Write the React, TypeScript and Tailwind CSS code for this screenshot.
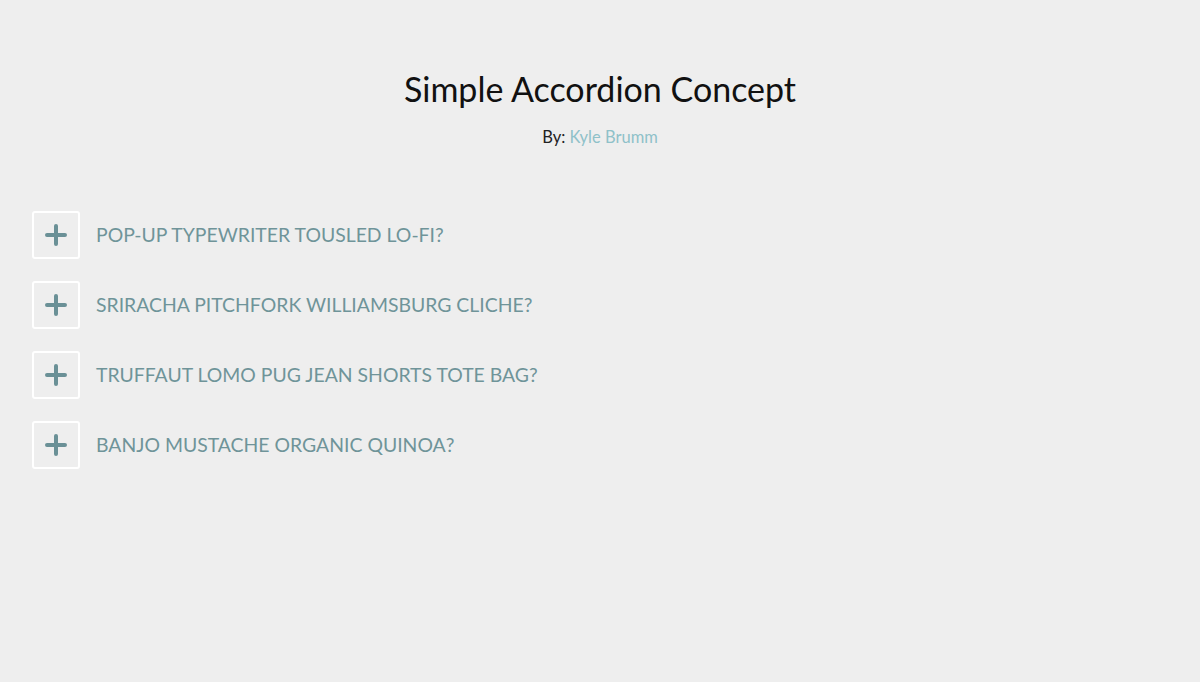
import { useState } from "react";

const items = [
  "Pop-up typewriter tousled lo-fi?",
  "Sriracha pitchfork williamsburg cliche?",
  "Truffaut lomo pug jean shorts tote bag?",
  "Banjo mustache organic quinoa?",
];

export default function App() {
  const [open, setOpen] = useState<number | null>(null);

  return (
    <div className="min-h-screen bg-[#eeeeee] font-['Lato','Open_Sans',sans-serif]">
      <header className="pt-[67px] text-center">
        <h1 className="text-[34px] leading-[44px] font-normal text-[#111]">Simple Accordion Concept</h1>
        <p className="mt-[16px] text-[16.5px] leading-[20px] text-[#222]">
          By: <span className="text-[#8fc1c9]">Kyle Brumm</span>
        </p>
      </header>

      <div className="mt-[64px] px-8 flex flex-col gap-[22px]">
        {items.map((q, i) => (
          <div key={q}>
            <button
              onClick={() => setOpen(open === i ? null : i)}
              className="flex items-center gap-4 text-left"
            >
              <span className="w-12 h-12 shrink-0 rounded-[3px] border-2 border-white flex items-center justify-center">
                <svg width="22" height="22" viewBox="0 0 22 22">
                  <path d="M11 2v18M2 11h18" stroke="#6a9096" strokeWidth="4" strokeLinecap="round" />
                </svg>
              </span>
              <span className="text-[19.4px] uppercase text-[#6f9499]">{q}</span>
            </button>
            {open === i && (
              <p className="ml-16 mt-2 text-[15px] text-[#555]">
                Lorem ipsum dolor sit amet, consectetur adipisicing elit.
              </p>
            )}
          </div>
        ))}
      </div>
    </div>
  );
}
